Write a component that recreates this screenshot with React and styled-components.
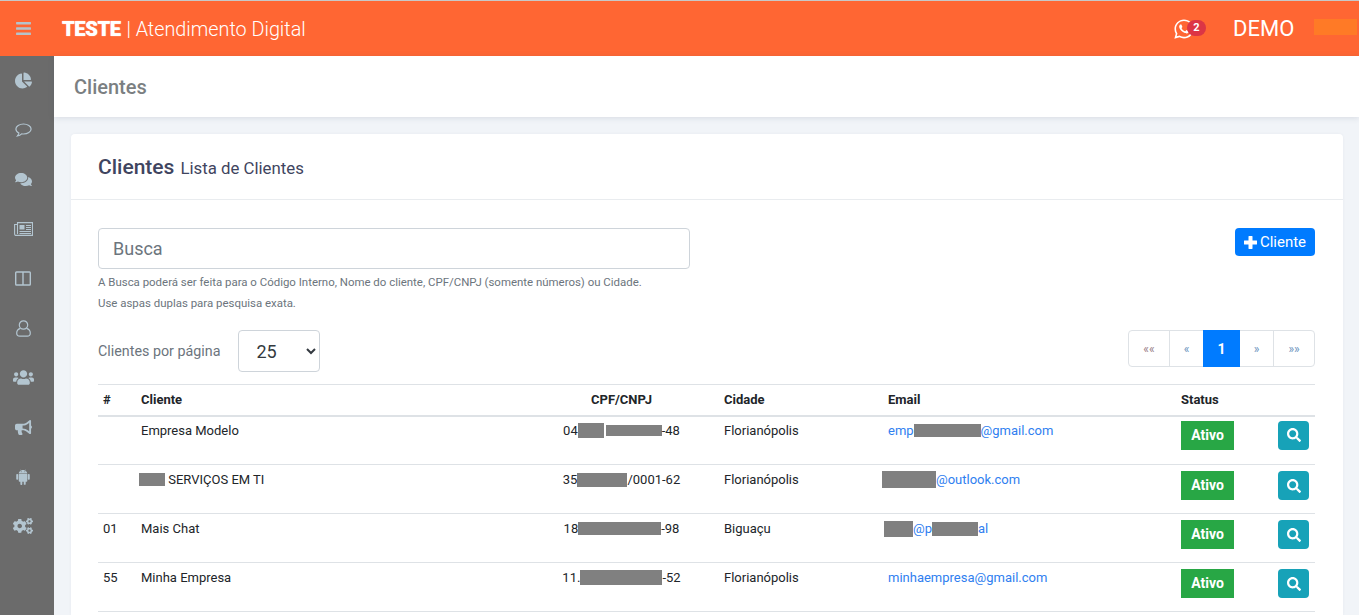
import React from 'react';
import styled, { createGlobalStyle } from 'styled-components';
import {
  FaBars, FaChartPie, FaComments, FaUsers,
  FaBullhorn, FaCogs, FaWhatsapp, FaSearch,
} from 'react-icons/fa';
import { AiFillAndroid } from 'react-icons/ai';

const GlobalStyle = createGlobalStyle`
  html, body { margin: 0; height: 100%; overflow: hidden; background: #f1f4f8; }
  body { font-family: Roboto, "Liberation Sans", sans-serif; color: #212529; }
  * { box-sizing: border-box; }
`;

// topo
const Topbar = styled.header`
  height: 56px;
  border-top: 1px solid #c8c8c8;
  background: #ff6633;
  display: flex;
  align-items: center;
  color: #fff;
`;
const Burger = styled.div`
  width: 54px;
  padding-left: 15px;
  color: #b5c3cb;
  font-size: 17px;
  display: flex;
`;
const Brand = styled.div`
  margin-left: 8px;
  font-size: 19.8px;
  font-weight: 300;
  b { font-size: 20px; font-weight: 900; letter-spacing: -0.3px; text-shadow: 0 0 1px #fff; margin-right: 1px; }
`;
const Spacer = styled.div`
  flex-grow: 1;
`;
const Chat = styled.div`
  position: relative;
  font-size: 22px;
  display: flex;
  margin-right: 27px;
  width: 33px;
`;
const Badge = styled.span`
  position: absolute;
  left: 14px;
  top: 2px;
  width: 19px;
  height: 16px;
  border-radius: 8px;
  background: #dc3545;
  font-size: 11px;
  font-weight: 700;
  text-align: center;
  line-height: 16px;
`;
const UserName = styled.div`
  font-size: 22px;
  width: 81px;
`;
const OrangeBlock = styled.div`
  width: 43px;
  height: 16px;
  margin: 0 2px 4px 0;
  background: #ff7a26;
`;

const Layout = styled.div`
  display: flex;
  height: calc(100vh - 56px);
`;
const Sidebar = styled.nav`
  width: 54px;
  flex-shrink: 0;
  background: #6b6b6b;
  color: #b3c5d0;
`;
const NavItem = styled.div`
  height: 49.5px;
  display: flex;
  align-items: center;
  justify-content: center;
  padding-right: 8px;
  font-size: ${p => p.$size || 17}px;
`;
const Main = styled.main`
  flex-grow: 1;
  min-width: 0;
  display: flex;
  flex-direction: column;
`;
const PageTitle = styled.div`
  height: 61px;
  flex-shrink: 0;
  background: #fff;
  box-shadow: 0 1px 6px rgba(60, 70, 100, 0.14);
  padding-left: 20px;
  display: flex;
  align-items: center;
  font-size: 20px;
  font-weight: 500;
  color: #7b7f82;
`;
const Card = styled.section`
  flex-grow: 1;
  margin: 17px 16px 0 17px;
  background: #fff;
  border-radius: 4px 4px 0 0;
  box-shadow: 0 0 3px rgba(60, 70, 100, 0.06);
`;
const CardHeader = styled.div`
  height: 66px;
  border-bottom: 1px solid #e9ecef;
  padding-left: 27px;
  display: flex;
  align-items: center;
  gap: 6px;
  color: #3f4560;
`;
const CardTitle = styled.span`
  font-size: 21px;
  font-weight: 500;
`;
const CardSub = styled.span`
  font-size: 16.8px;
  padding-top: 2px;
`;
const CardBody = styled.div`
  padding: 28px 28px 0 27px;
`;
const SearchRow = styled.div`
  display: flex;
  justify-content: space-between;
  align-items: flex-start;
`;
const SearchInput = styled.input`
  display: block;
  width: 592px;
  height: 41px;
  border: 1px solid #ced4da;
  border-radius: 4px;
  padding: 0 14px;
  font: 18px Roboto, sans-serif;
  &::placeholder { color: #6c757d; opacity: 1; }
`;
const Help = styled.div`
  font-size: 11.44px;
  line-height: 21px;
  color: #6c757d;
  margin-top: ${p => p.$top || 0}px;
`;
const AddButton = styled.button`
  width: 80px;
  height: 28px;
  border: 0;
  border-radius: 4px;
  background: #007bff;
  color: #fff;
  font: 15px Roboto, sans-serif;
  display: flex;
  align-items: center;
  justify-content: center;
  gap: 3px;
  padding: 0;
`;
const PerPageRow = styled.div`
  display: flex;
  justify-content: space-between;
  align-items: flex-start;
  margin-top: 16px;
`;
const PerPage = styled.div`
  display: flex;
  align-items: center;
  gap: 18px;
  font-size: 14.3px;
  color: #6c757d;
`;
const Select = styled.select`
  width: 82px;
  height: 42px;
  border: 1px solid #ced4da;
  border-radius: 4px;
  background: #fff;
  color: #343a40;
  padding-left: 13px;
  font: 18px Roboto, sans-serif;
`;
const Pager = styled.div`
  display: flex;
  height: 37px;
  border: 1px solid #dee2e6;
  border-radius: 4px;
`;
const PageLink = styled.div`
  width: ${p => p.$w}px;
  display: flex;
  align-items: center;
  justify-content: center;
  font-size: ${p => (p.$active ? 14 : 12)}px;
  font-weight: ${p => (p.$active ? 700 : 400)};
  color: ${p => (p.$active ? '#fff' : p.$muted ? '#9a8088' : '#6b93bd')};
  background: ${p => (p.$active ? '#007bff' : 'transparent')};
  margin: ${p => (p.$active ? '-1px 0' : 0)};
  border-left: ${p => (p.$first || p.$active ? '0' : '1px solid #dee2e6')};
`;

// tabela
const Table = styled.table`
  width: 1217px;
  margin-top: 12px;
  border-collapse: collapse;
  table-layout: fixed;
  font-size: 13px;
`;
const Th = styled.th`
  height: 31px;
  padding: 0 5px;
  font-size: 13px;
  font-weight: 700;
  text-align: ${p => p.$align || 'left'};
  border-top: 1px solid #dee2e6;
  border-bottom: 2px solid #dee2e6;
`;
const Td = styled.td`
  padding: 7px 5px 0;
  vertical-align: top;
  line-height: 15px;
  border-bottom: 1px solid #dee2e6;
  text-align: ${p => p.$align || 'left'};
  white-space: nowrap;
`;
const Redact = styled.span`
  display: inline-block;
  vertical-align: middle;
  width: ${p => p.$w}px;
  height: ${p => p.$h}px;
  margin-left: ${p => p.$ml || 0}px;
  margin-top: -2px;
  background: #808080;
`;
const EmailLink = styled.a`
  color: #2f80f0;
  text-decoration: none;
`;
const Status = styled.span`
  display: flex;
  align-items: center;
  justify-content: center;
  width: 53px;
  height: 29px;
  margin-top: -1px;
  background: #28a745;
  color: #fff;
  font-size: 14px;
  font-weight: 700;
`;
const ViewButton = styled.button`
  display: flex;
  align-items: center;
  justify-content: center;
  width: 31px;
  height: 29px;
  margin: -1px 0 0 1px;
  border: 0;
  padding: 0;
  border-radius: 4px;
  background: #17a2b8;
  color: #fff;
  font-size: 14px;
`;
const Tr = styled.tr`
  height: 49px;
  &:first-child td { padding-top: 6px; }
  &:first-child ${Status}, &:first-child ${ViewButton} { margin-top: -2px; }
`;

const CommentIcon = () => (
  <svg width="17" height="15" viewBox="0 0 17 15" fill="none" stroke="currentColor" strokeWidth="1.2">
    <path d="M8.5 1C4.4 1 .9 3.2.9 6c0 1.7 1.2 3.1 3 4-.2 1-.7 2-1.5 3 1.600-.3 3.100-1 4.300-2.200.6.1 1.200.2 1.800.2 4.100 0 7.600-2.200 7.600-5S12.600 1 8.500 1z" />
  </svg>
);

const NewspaperIcon = () => (
  <svg width="19" height="14" viewBox="0 0 19 14" fill="none" stroke="currentColor" strokeWidth="1.1">
    <path d="M3.500.6h15v12.800H2c-.8 0-1.400-.6-1.400-1.400V2.500h2.900z" />
    <path d="M3.500 2.500V12" />
    <rect x="5.500" y="3" width="5" height="4.500" fill="currentColor" stroke="none" />
    <path d="M12 3.500h5M12 5.500h5M12 7.500h5M5.500 9.500h11.500M5.500 11.500h11.500" />
  </svg>
);

const ColumnsIcon = () => (
  <svg width="16" height="15" viewBox="0 0 16 15" fill="none" stroke="currentColor" strokeWidth="1.4">
    <rect x="0.7" y="1" width="14.6" height="13" rx="0.8" />
    <path d="M8 1v13" />
  </svg>
);

const UserIcon = () => (
  <svg width="15" height="17" viewBox="0 0 15 17" fill="none" stroke="currentColor" strokeWidth="1.2">
    <circle cx="7.5" cy="5" r="4.2" />
    <path d="M4.4 8.400C2 9.200.7 10.900.7 13c0 1.900 1.200 3.200 3.100 3.200h7.400c1.900 0 3.100-1.300 3.100-3.200 0-2.100-1.300-3.800-3.700-4.600" />
  </svg>
);

const PlusIcon = () => (
  <svg width="13" height="13" viewBox="0 0 13 13" fill="currentColor">
    <path d="M5 0h3c.4 0 .5.2.5.5V4.500h4c.3 0 .5.1.5.5v3c0 .4-.2.5-.5.5h-4v4c0 .3-.1.500-.5.500H5c-.4 0-.5-.2-.5-.5v-4h-4C.2 8.500 0 8.400 0 8V5c0-.4.200-.5.500-.5h4v-4C4.500.200 4.600 0 5 0z" />
  </svg>
);

const navIcons = [
  { icon: <FaChartPie />, size: 17 },
  { icon: <CommentIcon /> },
  { icon: <FaComments />, size: 17 },
  { icon: <NewspaperIcon /> },
  { icon: <ColumnsIcon /> },
  { icon: <UserIcon /> },
  { icon: <FaUsers />, size: 21 },
  { icon: <FaBullhorn />, size: 17 },
  { icon: <AiFillAndroid />, size: 18 },
  { icon: <FaCogs />, size: 20 },
];

const rows = [
  {
    id: '',
    name: 'Empresa Modelo',
    cpf: <>04<Redact $w={26} $h={15} /><Redact $w={56} $h={11} $ml={2} />-48</>,
    city: 'Florianópolis',
    email: <EmailLink>emp<Redact $w={67} $h={13} />@gmail.com</EmailLink>,
  },
  {
    id: '',
    name: <><Redact $w={26} $h={13} $ml={-2} /> SERVIÇOS EM TI</>,
    cpf: <>35<Redact $w={50} $h={14} />/0001-62</>,
    city: 'Florianópolis',
    email: <EmailLink><Redact $w={54} $h={17} $ml={-6} />@outlook.com</EmailLink>,
  },
  {
    id: '01',
    name: 'Mais Chat',
    cpf: <>18<Redact $w={83} $h={13} />-98</>,
    city: 'Biguaçu',
    email: <EmailLink><Redact $w={29} $h={16} $ml={-4} />@p<Redact $w={46} $h={14} />al</EmailLink>,
  },
  {
    id: '55',
    name: 'Minha Empresa',
    cpf: <>11.<Redact $w={82} $h={15} />-52</>,
    city: 'Florianópolis',
    email: <EmailLink>minhaempresa@gmail.com</EmailLink>,
  },
];

export default function App() {
  return (
    <>
      <GlobalStyle />
      <Topbar>
        <Burger><FaBars /></Burger>
        <Brand><b>TESTE</b> | Atendimento Digital</Brand>
        <Spacer />
        <Chat>
          <FaWhatsapp />
          <Badge>2</Badge>
        </Chat>
        <UserName>DEMO</UserName>
        <OrangeBlock />
      </Topbar>
      <Layout>
        <Sidebar>
          {navIcons.map((item, i) => <NavItem key={i} $size={item.size}>{item.icon}</NavItem>)}
        </Sidebar>
        <Main>
          <PageTitle>Clientes</PageTitle>
          <Card>
            <CardHeader>
              <CardTitle>Clientes</CardTitle>
              <CardSub>Lista de Clientes</CardSub>
            </CardHeader>
            <CardBody>
              <SearchRow>
                <div>
                  <SearchInput placeholder="Busca" />
                  <Help $top={3}>A Busca poderá ser feita para o Código Interno, Nome do cliente, CPF/CNPJ (somente números) ou Cidade.</Help>
                  <Help>Use aspas duplas para pesquisa exata.</Help>
                </div>
                <AddButton><PlusIcon /> Cliente</AddButton>
              </SearchRow>
              <PerPageRow>
                <PerPage>
                  Clientes por página
                  <Select defaultValue="25"><option>25</option></Select>
                </PerPage>
                <Pager>
                  <PageLink $w={40} $first $muted>««</PageLink>
                  <PageLink $w={34}>«</PageLink>
                  <PageLink $w={37} $active>1</PageLink>
                  <PageLink $w={33} $first>»</PageLink>
                  <PageLink $w={41}>»»</PageLink>
                </Pager>
              </PerPageRow>
              <Table>
                <colgroup>
                  <col width="38" /><col width="388" /><col width="195" /><col width="164" />
                  <col width="293" /><col width="96" /><col width="43" />
                </colgroup>
                <thead>
                  <tr>
                    <Th>#</Th>
                    <Th>Cliente</Th>
                    <Th $align="center">CPF/CNPJ</Th>
                    <Th>Cidade</Th>
                    <Th>Email</Th>
                    <Th>Status</Th>
                    <Th />
                  </tr>
                </thead>
                <tbody>
                  {rows.map((row, i) => (
                    <Tr key={i}>
                      <Td>{row.id}</Td>
                      <Td>{row.name}</Td>
                      <Td $align="center">{row.cpf}</Td>
                      <Td>{row.city}</Td>
                      <Td>{row.email}</Td>
                      <Td><Status>Ativo</Status></Td>
                      <Td><ViewButton><FaSearch /></ViewButton></Td>
                    </Tr>
                  ))}
                </tbody>
              </Table>
            </CardBody>
          </Card>
        </Main>
      </Layout>
    </>
  );
}
